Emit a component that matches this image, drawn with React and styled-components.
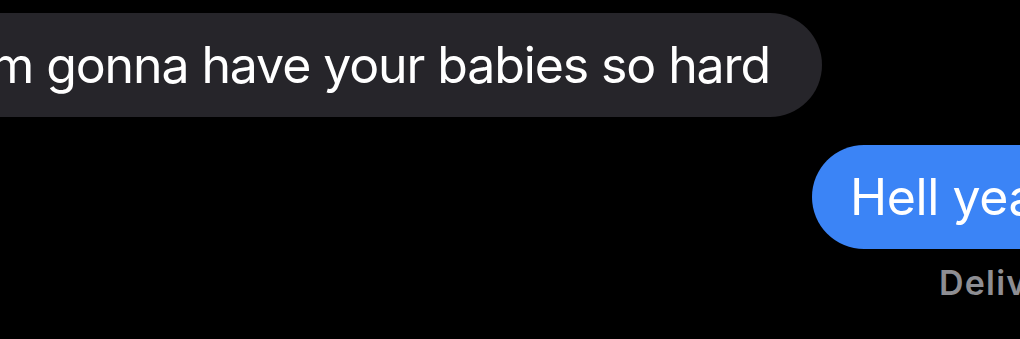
import React from 'react';
import styled, { createGlobalStyle } from 'styled-components';

const GlobalStyle = createGlobalStyle`
  html, body {
    margin: 0;
    padding: 0;
    background: #000;
    overflow: hidden;
  }
  body {
    font-family: Inter, "Noto Sans", "Liberation Sans", sans-serif;
    -webkit-font-smoothing: antialiased;
  }
`;

const Thread = styled.div`
  width: 1020px;
  height: 339px;
  overflow: hidden;
  background: #000;
  padding-top: 13px;
  box-sizing: border-box;
`;

const Row = styled.div`
  display: flex;
  justify-content: ${props => (props.$outgoing ? 'flex-start' : 'flex-end')};
  padding-left: ${props => (props.$outgoing ? '812px' : '0')};
  padding-right: ${props => (props.$outgoing ? '0' : '198px')};
  margin-bottom: ${props => props.$gap || '0'};
`;

const Bubble = styled.div`
  flex-shrink: 0;
  white-space: nowrap;
  font-size: 50px;
  line-height: 60px;
  letter-spacing: ${props => (props.$outgoing ? '-0.4px' : '-1.1px')};
  color: #fff;
  padding: ${props => (props.$outgoing ? '22px 40px 22px 38px' : '22px 52px 22px 48px')};
  border-radius: 52px;
  background: ${props => (props.$outgoing ? '#3b84f6' : '#26252a')};
`;

const Status = styled.div`
  padding-left: 939px;
  margin-top: 14px;
  font-size: 34px;
  line-height: 40px;
  font-weight: 600;
  letter-spacing: 1.2px;
  color: #8e8e93;
  white-space: nowrap;
`;

const App = () => (
  <>
    <GlobalStyle />
    <Thread>
      <Row $gap="28px">
        <Bubble>I'm gonna have your babies so hard</Bubble>
      </Row>
      <Row $outgoing>
        <Bubble $outgoing>Hell yeah</Bubble>
      </Row>
      <Status>Delivered</Status>
    </Thread>
  </>
);

export default App;
